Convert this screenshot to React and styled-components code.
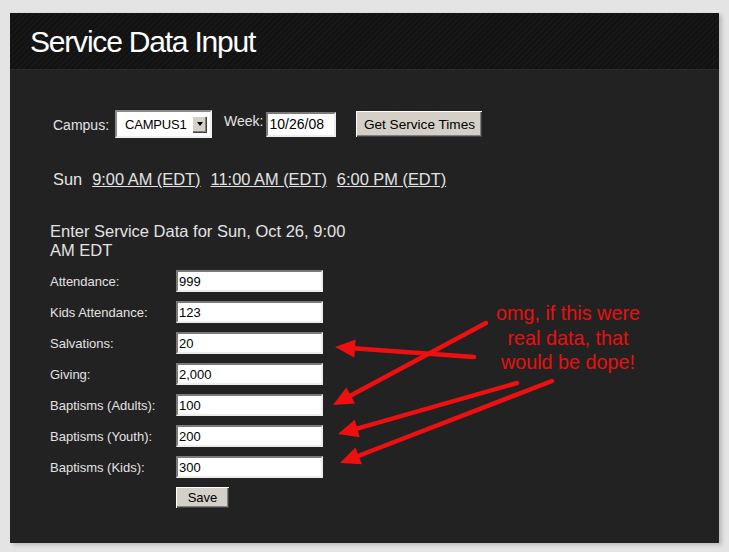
import React from "react"
import styled, { createGlobalStyle } from "styled-components"

const GlobalStyle = createGlobalStyle`
  html, body {
    margin: 0;
    padding: 0;
    background: #e4e4e4;
  }
  body {
    font-family: "Liberation Sans", Arial, sans-serif;
  }
`

const Page = styled.div`
  position: relative;
  width: 729px;
  height: 552px;
  padding: 13px 0 0 10px;
  box-sizing: border-box;
  overflow: hidden;
`

const Panel = styled.div`
  width: 709px;
  height: 530px;
  background: #222222;
  box-shadow: 3px 2px 4px rgba(0, 0, 0, 0.18);
`

const Header = styled.div`
  height: 56px;
  display: flex;
  align-items: center;
  padding-left: 20px;
  background: repeating-linear-gradient(
    135deg,
    #171717 0px,
    #171717 2px,
    #121212 2px,
    #121212 4px
  );
  border-bottom: 1px solid #2a2a2a;
`

const Title = styled.h1`
  margin: 0;
  color: #ffffff;
  font-size: 30px;
  font-weight: normal;
  letter-spacing: -1.2px;
  margin-top: 2px;
`

const Body = styled.div`
  padding: 40px 0 0 40px;
  color: #dddddd;
`

const Toolbar = styled.div`
  display: flex;
  align-items: center;
  height: 28px;
  padding-left: 3px;
`

const Label = styled.span`
  font-size: 14px;
  color: #e2e2e2;
  margin-right: ${({ $gap }) => $gap || 6}px;
  position: relative;
  top: ${({ $raise }) => ($raise ? -3 : 1)}px;
`

const SelectBox = styled.div`
  width: 97px;
  height: 28px;
  box-sizing: border-box;
  background: #ffffff;
  border: 2px solid;
  border-color: #8a8a8a #f0f0f0 #f0f0f0 #8a8a8a;
  display: flex;
  align-items: center;
  justify-content: space-between;
  padding: 0 3px 0 8px;
  margin-right: 12px;
  color: #000;
  font-size: 13px;
  letter-spacing: -0.2px;
`

const DropButton = styled.div`
  width: 15px;
  height: 17px;
  background: #d4d0c8;
  box-shadow: inset 1px 1px 0 #ffffff, inset -1px -1px 0 #404040,
    inset -2px -2px 0 #808080;
  display: flex;
  align-items: center;
  justify-content: center;

  &::after {
    content: "";
    border-left: 3.5px solid transparent;
    border-right: 3.5px solid transparent;
    border-top: 4px solid #000;
  }
`

const TextBox = styled.input`
  box-sizing: border-box;
  width: ${({ $w }) => $w || 147}px;
  height: ${({ $h }) => $h || 22}px;
  border: 2px solid;
  border-color: #7a7a7a #ececec #ececec #7a7a7a;
  background: #ffffff;
  font-family: "Liberation Sans", Arial, sans-serif;
  font-size: ${({ $fs }) => $fs || 13}px;
  color: #000;
  padding: 0 1px;
  margin: 0;
  outline: none;
`

const Button = styled.button`
  box-sizing: border-box;
  height: ${({ $h }) => $h || 26}px;
  width: ${({ $w }) => $w}px;
  background: #d4d0c8;
  border: none;
  box-shadow: inset 1px 1px 0 #ffffff, inset -1px -1px 0 #404040,
    inset -2px -2px 0 #808080;
  font-family: "Liberation Sans", Arial, sans-serif;
  font-size: ${({ $fs }) => $fs || 13}px;
  color: #000;
  padding: 0;
  margin-left: ${({ $ml }) => $ml || 0}px;
`

const TimesRow = styled.div`
  display: flex;
  gap: 10px;
  margin-top: 32px;
  padding-left: 3px;
  font-size: 16.4px;
  line-height: 18px;
  color: #e2e2e2;
`

const TimeLink = styled.a`
  color: #e2e2e2;
  text-decoration: underline;
`

const SectionTitle = styled.div`
  margin-top: 34px;
  width: 310px;
  font-size: 16.5px;
  line-height: 19px;
  color: #e2e2e2;
`

const Form = styled.div`
  margin-top: 10px;
  display: grid;
  grid-template-columns: 126px 147px;
  row-gap: 9px;
  align-items: center;
`

const FieldLabel = styled.label`
  font-size: 13px;
  color: #e2e2e2;
`

const Overlay = styled.svg`
  position: absolute;
  left: 0;
  top: 0;
  pointer-events: none;
`

const Note = styled.div`
  position: absolute;
  left: 468px;
  top: 301px;
  width: 200px;
  text-align: center;
  color: #e8100f;
  font-size: 19.8px;
  line-height: 24.5px;
`

const fields = [
  ["Attendance:", "999"],
  ["Kids Attendance:", "123"],
  ["Salvations:", "20"],
  ["Giving:", "2,000"],
  ["Baptisms (Adults):", "100"],
  ["Baptisms (Youth):", "200"],
  ["Baptisms (Kids):", "300"],
]

const arrows = [
  [474, 357, 335, 347],
  [486, 323, 333, 405],
  [517, 383, 338, 434],
  [552, 381, 340, 463],
]

const Arrow = ({ x1, y1, x2, y2 }) => {
  const dx = x2 - x1
  const dy = y2 - y1
  const len = Math.hypot(dx, dy)
  const ux = dx / len
  const uy = dy / len
  const bx = x2 - ux * 20
  const by = y2 - uy * 20
  const px = -uy * 9
  const py = ux * 9
  const head = `${x2},${y2} ${bx + px},${by + py} ${bx - px},${by - py}`
  return (
    <g>
      <line
        x1={x1}
        y1={y1}
        x2={bx + ux * 2}
        y2={by + uy * 2}
        stroke="#ee1010"
        strokeWidth="4.5"
        strokeLinecap="round"
      />
      <polygon points={head} fill="#ee1010" />
    </g>
  )
}

const App = () => {
  return (
    <Page>
      <GlobalStyle />
      <Panel>
        <Header>
          <Title>Service Data Input</Title>
        </Header>
        <Body>
          <Toolbar>
            <Label>Campus:</Label>
            <SelectBox>
              CAMPUS1
              <DropButton />
            </SelectBox>
            <Label $raise $gap={3}>Week:</Label>
            <TextBox $w={70} $h={25} $fs={14} readOnly value="10/26/08" />
            <Button $w={126} $ml={20} $fs={13.6}>Get Service Times</Button>
          </Toolbar>

          <TimesRow>
            <span>Sun</span>
            <TimeLink href="#">9:00 AM (EDT)</TimeLink>
            <TimeLink href="#">11:00 AM (EDT)</TimeLink>
            <TimeLink href="#">6:00 PM (EDT)</TimeLink>
          </TimesRow>

          <SectionTitle>Enter Service Data for Sun, Oct 26, 9:00 AM EDT</SectionTitle>

          <Form>
            {fields.map(([label, value]) => (
              <React.Fragment key={label}>
                <FieldLabel>{label}</FieldLabel>
                <TextBox readOnly value={value} />
              </React.Fragment>
            ))}
            <span />
            <Button $w={53} $h={21}>Save</Button>
          </Form>
        </Body>
      </Panel>

      <Overlay width="729" height="552" viewBox="0 0 729 552">
        {arrows.map(([x1, y1, x2, y2], i) => (
          <Arrow key={i} x1={x1} y1={y1} x2={x2} y2={y2} />
        ))}
      </Overlay>
      <Note>
        omg, if this were
        <br />
        real data, that
        <br />
        would be dope!
      </Note>
    </Page>
  )
}

export default App
